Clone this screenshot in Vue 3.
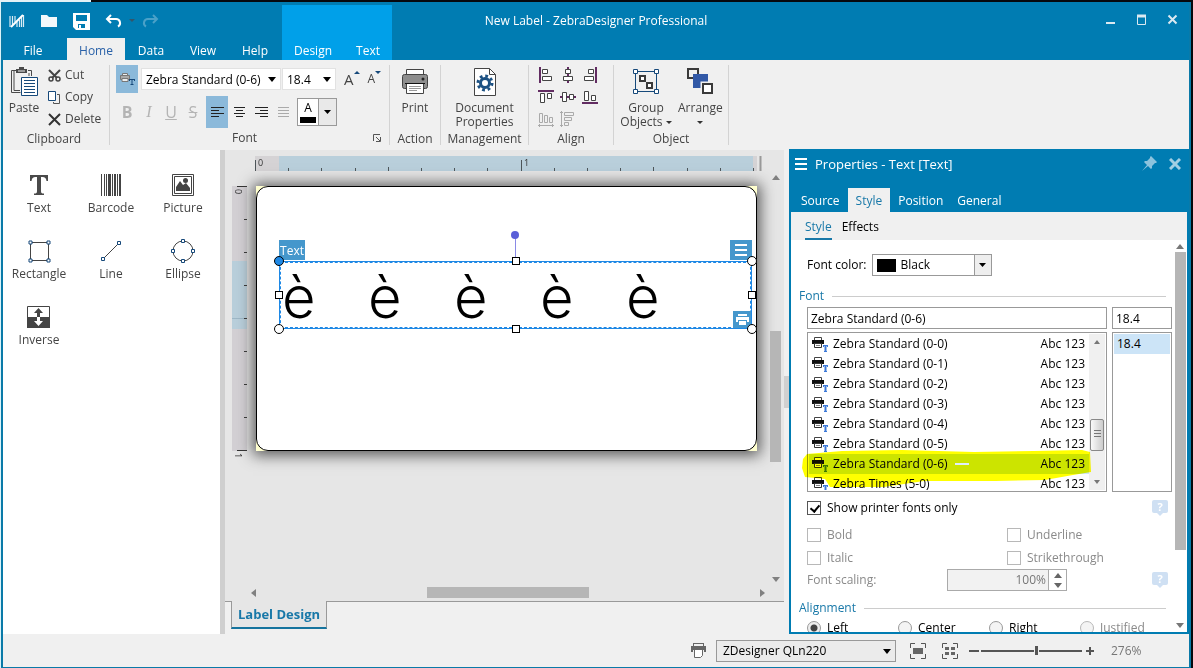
<script setup>
import { ref } from 'vue'

const fontName = ref('Zebra Standard (0-6)')
const fontSize = ref('18.4')
const zoom = ref(55)
const printerOnly = ref(true)
const alignment = ref('Left')

const mainTabs = ['File', 'Home', 'Data', 'View', 'Help']
const contextTabs = ['Design', 'Text']
const panelTabs = ['Source', 'Style', 'Position', 'General']
const fonts = [
  'Zebra Standard (0-0)', 'Zebra Standard (0-1)', 'Zebra Standard (0-2)', 'Zebra Standard (0-3)',
  'Zebra Standard (0-4)', 'Zebra Standard (0-5)', 'Zebra Standard (0-6)', 'Zebra Times (5-0)',
]
const alignments = ['Left', 'Center', 'Right', 'Justified']
const tools = ['Text', 'Barcode', 'Picture', 'Rectangle', 'Line', 'Ellipse', 'Inverse']
const handles = ['nw active round', 'n', 'ne round', 'w', 'e', 'sw round', 's', 'se round']
const hTicks = Array.from({ length: 16 }, (_, i) => ({ pos: Math.round(i * 33.2), big: i % 8 === 0, mid: i % 4 === 0 }))
const vTicks = Array.from({ length: 9 }, (_, i) => ({ pos: Math.round(i * 33), big: i % 8 === 0 }))
</script>

<template>
  <div class="page">
    <div class="window">
      <header class="top">
        <div class="quick">
          <svg class="logo" width="16" height="14" viewBox="0 0 16 14"><path d="M1 2v11M3.500 2v9M6 2v6M8 8v5M10.500 6v7M12.500 3v10M14.500 1v12" stroke="#d9ecf5" stroke-width="1.200" /><path d="M2 13 14 1" stroke="#fff" stroke-width="2" /></svg>
          <button aria-label="Open"><svg width="18" height="14" viewBox="0 0 18 14"><path d="M1 1h6l2 2h8v10H1z" fill="#f3f8fb" /></svg></button>
          <button aria-label="Save"><svg width="17" height="17" viewBox="0 0 17 17"><path d="M0 0h17v17H3l-3-3z" fill="#fff" /><path d="M3 2h11v6H3zM5 11h7v4H5z" fill="#007cb2" /><path d="M6 12h2v3H6z" fill="#fff" /></svg></button>
          <button aria-label="Undo"><svg width="18" height="14" viewBox="0 0 18 14"><path d="M2 5h9a4 4 0 0 1 2 7.500M6 1 2 5l4 4" fill="none" stroke="#fff" stroke-width="2" /></svg></button>
          <svg class="tiny" width="6" height="4"><path d="M0 0h6L3 3z" fill="#33566b" /></svg>
          <button aria-label="Redo" disabled><svg width="18" height="14" viewBox="0 0 18 14"><path d="M16 5H7a4 4 0 0 0-2 7.500M12 1l4 4-4 4" fill="none" stroke="#4aa1c8" stroke-width="2" /></svg></button>
        </div>
        <h1>New Label - ZebraDesigner Professional</h1>
        <nav class="tabs">
          <button v-for="t in mainTabs" :key="t" :class="['tab', 'tab-' + t.toLowerCase()]">{{ t }}</button>
        </nav>
        <nav class="context">
          <button v-for="t in contextTabs" :key="t" class="tab">{{ t }}</button>
        </nav>
        <div class="controls">
          <button aria-label="Minimize"><svg width="12" height="12"><path d="M1 9h9" stroke="#dbe9f1" stroke-width="2" /></svg></button>
          <button aria-label="Maximize"><svg width="12" height="12"><path d="M1.500 2v8.500h8V2" fill="none" stroke="#dbe9f1" /><path d="M1 2h9" stroke="#dbe9f1" stroke-width="3" /></svg></button>
          <button aria-label="Close"><svg width="12" height="12"><path d="m1.500 1.500 8 8m0-8-8 8" stroke="#dbe9f1" stroke-width="2" /></svg></button>
        </div>
      </header>

      <section class="ribbon">
        <div class="group clipboard">
          <div class="body">
            <button class="large">
              <svg width="28" height="30" viewBox="0 0 28 30"><path d="M8 3.500H1.500v22h9M18 3.500h3.500V9M4 3.500v20h6M19 6v3" fill="none" stroke="#4a4a4a" /><path d="M6 6V2h3V0h5v2h3v4z" fill="#4a4a4a" /><path d="M8 4h7" stroke="#f0f0f0" /><path d="M11.500 10.500h16v18h-16z" fill="#fff" stroke="#16497a" /><path d="M14 13.500h11M14 16.500h11M14 19.500h11M14 22.500h11M14 25.500h11" stroke="#16497a" /></svg>
              <span>Paste</span>
            </button>
            <div class="small-list">
              <button><svg width="13" height="13" viewBox="0 0 13 13"><path d="m1 1 8 8M12 1 4 9" stroke="#444" stroke-width="2" /><circle cx="3" cy="10" r="2" fill="none" stroke="#444" stroke-width="1.500" /><circle cx="10" cy="10" r="2" fill="none" stroke="#444" stroke-width="1.500" /></svg>Cut</button>
              <button><svg width="13" height="13" viewBox="0 0 13 13"><path d="M.500.500h7v9h-7z" fill="#fff" stroke="#16497a" /><path d="M9 3.500h2.500v9h-6V11" fill="none" stroke="#555" /></svg>Copy</button>
              <button><svg width="13" height="13" viewBox="0 0 13 13"><path d="m1 1 11 11M12 1 1 12" stroke="#333" stroke-width="2" /></svg>Delete</button>
            </div>
          </div>
          <div class="caption"><span>Clipboard</span></div>
        </div>
        <i class="sep"></i>
        <div class="group font">
          <div class="font-row first">
            <button class="toggle on" aria-label="Printer fonts"><svg width="15" height="14" viewBox="0 0 15 14"><path d="M2.500 3.500v-2h5v2" fill="#eee" stroke="#777" /><path d="M.5 3.500h9v4h-9z" fill="#aaa" stroke="#777" /><path d="M2 6.500h6v3H2z" fill="#eee" stroke="#777" /><path d="M9 7.500h6M12 7v6M10.500 12.500h3M9.500 7v2M14.500 7v2" stroke="#16497a" /></svg></button>
            <span class="combo name"><select aria-label="Font"><option>{{ fontName }}</option></select></span>
            <span class="combo size"><select aria-label="Font size"><option>{{ fontSize }}</option></select></span>
            <button class="grow" aria-label="Increase font size">A<svg width="6" height="3"><path d="M0 3h6L3 0z" fill="#16497a" /></svg></button>
            <button class="grow less" aria-label="Decrease font size">A<svg width="6" height="3"><path d="M0 0h6L3 3z" fill="#16497a" /></svg></button>
          </div>
          <div class="font-row second">
            <button class="toggle fmt" disabled><b>B</b></button>
            <button class="toggle fmt" disabled><i>I</i></button>
            <button class="toggle fmt" disabled><u>U</u></button>
            <button class="toggle fmt" disabled><s>S</s></button>
            <button class="toggle on left" aria-label="Align left"><svg width="13" height="11"><path d="M0 .5h13M0 3.500h8M0 6.500h13M0 9.500h8" stroke="#222" /></svg></button>
            <button class="toggle" aria-label="Align center"><svg width="13" height="11"><path d="M1 .5h11M3 3.500h7M1 6.500h11M3 9.500h7" stroke="#222" /></svg></button>
            <button class="toggle" aria-label="Align right"><svg width="13" height="11"><path d="M0 .5h13M5 3.500h8M0 6.500h13M5 9.500h8" stroke="#222" /></svg></button>
            <button class="toggle" aria-label="Justify" disabled><svg width="13" height="11"><path d="M1 .5h11M1 3.500h11M1 6.500h11M1 9.500h11" stroke="#aaa" /></svg></button>
            <button class="color"><span class="letter">A<i></i></span><span class="drop"><svg width="7" height="4"><path d="M0 0h7L3.500 4z" /></svg></span></button>
          </div>
          <div class="caption"><span>Font</span><svg width="8" height="8"><path d="M.5 7V.5H7M3 3l4 4M7.500 3v4.500H3" fill="none" stroke="#555" /></svg></div>
        </div>
        <i class="sep"></i>
        <div class="group action">
          <div class="body">
            <button class="large">
              <svg width="28" height="30" viewBox="0 0 28 30"><path d="M5.500 8V2.500h17V8" fill="#fff" stroke="#444" /><rect x="1.500" y="7.500" width="25" height="14" rx="2" fill="#8e8e8e" stroke="#444" /><circle cx="22" cy="12" r="1.500" fill="#222" /><path d="M4 16.500h20" stroke="#111" /><path d="M5.500 17v9.500h17V17" fill="#fff" stroke="#444" /><path d="M8 19.500h12M8 21.500h12M8 23.500h8" stroke="#999" /></svg>
              <span>Print</span>
            </button>
          </div>
          <div class="caption"><span>Action</span></div>
        </div>
        <i class="sep"></i>
        <div class="group management">
          <div class="body">
            <button class="large">
              <svg width="28" height="30" viewBox="0 0 28 30"><path d="M3.500 1.500h15l6 6v21h-21z" fill="#fff" stroke="#444" /><path d="M18.500 1.500v6h6" fill="none" stroke="#444" /><circle cx="14" cy="16" r="4.500" fill="none" stroke="#1c5183" stroke-width="3" /><circle cx="14" cy="16" r="7" fill="none" stroke="#1c5183" stroke-width="3" stroke-dasharray="2.750 2.750" /></svg>
              <span>Document</span>
              <span>Properties</span>
            </button>
          </div>
          <div class="caption"><span>Management</span></div>
        </div>
        <i class="sep"></i>
        <div class="group align">
          <div class="body">
            <button aria-label="Align lefts"><svg width="16" height="16"><path d="M2 0v16" stroke="#622c62" stroke-width="2" /><path d="M4.500 2.500h5v4h-5zM4.500 9.500h9v4h-9z" fill="#fff" stroke="#444" /></svg></button>
            <button aria-label="Align centers"><svg width="16" height="16"><path d="M8 0v16" stroke="#622c62" stroke-width="2" /><path d="M5.500 2.500h5v4h-5zM3.500 9.500h9v4h-9z" fill="#fff" stroke="#444" /></svg></button>
            <button aria-label="Align rights"><svg width="16" height="16"><path d="M14 0v16" stroke="#622c62" stroke-width="2" /><path d="M6.500 2.500h5v4h-5zM2.500 9.500h9v4h-9z" fill="#fff" stroke="#444" /></svg></button>
            <button aria-label="Align tops"><svg width="16" height="16"><path d="M0 2h16" stroke="#622c62" stroke-width="2" /><path d="M2.500 4.500h4v9h-4zM9.500 4.500h4v5h-4z" fill="#fff" stroke="#444" /></svg></button>
            <button aria-label="Align middles"><svg width="16" height="16"><path d="M0 8h16" stroke="#622c62" stroke-width="2" /><path d="M2.500 3.500h4v9h-4zM9.500 5.500h4v5h-4z" fill="#fff" stroke="#444" /></svg></button>
            <button aria-label="Align bottoms"><svg width="16" height="16"><path d="M0 14h16" stroke="#622c62" stroke-width="2" /><path d="M2.500 2.500h4v9h-4zM9.500 6.500h4v5h-4z" fill="#fff" stroke="#444" /></svg></button>
            <button aria-label="Distribute horizontally" disabled><svg width="16" height="16"><path d="M1.500 2.500h3v9h-3zM6.500 4.500h3v7h-3zM11.500 6.500h3v5h-3zM0 14.500h16M1.500 13v3M14.500 13v3" fill="none" stroke="#aaa" /></svg></button>
            <button aria-label="Distribute vertically" disabled><svg width="16" height="16"><path d="M4.500 1.500h9v3h-9zM4.500 6.500h7v3h-7zM4.500 11.500h4v3h-4zM1.500 0v16M0 1.500h3M0 14.500h3" fill="none" stroke="#aaa" /></svg></button>
          </div>
          <div class="caption"><span>Align</span></div>
        </div>
        <i class="sep"></i>
        <div class="group object">
          <div class="body">
            <button class="large">
              <svg width="28" height="30" viewBox="0 0 28 30"><path d="M3.500 4.500h21v20h-21z" fill="none" stroke="#16497a" /><path d="M1.500 2.500h4v4h-4zM22.500 2.500h4v4h-4zM1.500 22.500h4v4h-4zM22.500 22.500h4v4h-4z" fill="#fff" stroke="#16497a" /><path d="M8 9h5v5H8zM15 16h5v5h-5z" fill="#fff" stroke="#3a3a3a" stroke-width="2" /></svg>
              <span>Group</span>
              <span>Objects <svg width="6" height="4"><path d="M0 0h6L3 3z" fill="#333" /></svg></span>
            </button>
            <button class="large">
              <svg width="28" height="30" viewBox="0 0 28 30"><path d="M2 2h10v9H2z" fill="none" stroke="#3a3a3a" stroke-width="2" /><path d="M7 7h15v14H7z" fill="#3158a6" /><path d="M17 17h9v9h-9z" fill="#fff" stroke="#f0f0f0" stroke-width="5" /><path d="M17 17h9v9h-9z" fill="#fff" stroke="#3a3a3a" stroke-width="2" /></svg>
              <span>Arrange</span>
              <span><svg width="6" height="4"><path d="M0 0h6L3 3z" fill="#333" /></svg></span>
            </button>
          </div>
          <div class="caption"><span>Object</span></div>
        </div>
        <i class="sep"></i>
      </section>

      <main class="work">
        <aside class="toolbox">
          <button v-for="t in tools" :key="t" class="tool">
            <svg width="26" height="26" viewBox="0 0 26 26">
              <path v-if="t === 'Text'" d="M4 3h18v6h-1.500c-.5-3-1.500-4-4-4H15v14c0 2 .5 2.500 3 2.500V23H8v-1.500c2.500 0 3-.5 3-2.500V5H9.500c-2.500 0-3.500 1-4 4H4z" fill="#4a4a4a" />
              <g v-else-if="t === 'Barcode'" fill="#444"><path d="M3 2h1v22H3zM6 2h1v22H6zM8 2h1v22H8zM10 2h3v22h-3zM14 2h1v22h-1zM16 2h2v22h-2zM19 2h1v22h-1zM21 2h2v22h-2z" /></g>
              <g v-else-if="t === 'Picture'"><path d="M2.500 2.500h21v21h-21z" fill="none" stroke="#444" /><path d="M4.500 4.500h17v17h-17z" fill="#fff" stroke="#444" /><path d="M6 19v-4l4-6 3 4 3-2 4 5v3z" fill="#444" /><circle cx="15.500" cy="8.500" r="2.500" fill="#444" /></g>
              <g v-else-if="t === 'Rectangle'" fill="#fff" stroke="#16497a"><path d="M4.500 4.500h18v18h-18z" stroke="#444" /><path d="M3 3h3v3H3zM21 3h3v3h-3zM3 21h3v3H3zM21 21h3v3h-3z" /></g>
              <g v-else-if="t === 'Line'" fill="#fff" stroke="#16497a"><path d="M5 21 21 5" stroke="#444" /><path d="M3.500 19.500h3v3h-3zM19.500 3.500h3v3h-3z" /></g>
              <g v-else-if="t === 'Ellipse'" fill="#fff" stroke="#16497a"><circle cx="13" cy="13" r="10" stroke="#444" /><path d="M11.500 1.500h3v3h-3zM11.500 21.500h3v3h-3zM1.500 11.500h3v3h-3zM21.500 11.500h3v3h-3z" /></g>
              <g v-else><path d="M1.500 2.500h22v21h-22z" fill="#fff" stroke="#444" /><path d="M1 13h23v11H1z" fill="#444" /><path d="M12.500 4 8 9h3v4h3V9h3z" fill="#444" /><path d="M12.500 22 8 17h3v-4h3v4h3z" fill="#fff" /></g>
            </svg>
            <span>{{ t }}</span>
          </button>
        </aside>

        <div class="design">
          <div class="canvas">
            <svg class="ruler-h" width="510" height="15">
              <rect width="502" height="15" fill="#d5d3d5" /><rect x="24" width="474" height="15" fill="#b9cfdb" />
              <path v-for="(k, i) in hTicks" :key="i" :d="`M${k.pos + 0.5} ${k.big ? 4 : k.mid ? 11 : 12}V15`" stroke="#4d5559" />
              <path d="M505.500 0v15" stroke="#999" stroke-width="2" /><text x="3" y="10">0</text><text x="269" y="10">1</text>
            </svg>
            <svg class="ruler-v" width="16" height="276">
              <rect width="15" height="265" fill="#d3d0d4" /><rect y="75" width="15" height="68" fill="#b9cfdb" /><path d="M0 132.500h15" stroke="#9db7c6" />
              <path v-for="(k, i) in vTicks" :key="i" :d="`M${k.big ? 5 : 12} ${k.pos + 0.5}H15`" stroke="#333" />
              <text transform="translate(3 3) rotate(90)">0</text><text transform="translate(3 267) rotate(90)">1</text>
            </svg>
            <div class="sheet">
              <div class="label">
                <div class="tag">Text</div>
                <button class="obj-menu" aria-label="Object menu"><svg width="12" height="13"><path d="M0 1h12M0 6h12M0 11h12" stroke="#fff" stroke-width="2" /></svg></button>
                <div class="stem"></div>
                <div class="object-box">
                  <span v-for="n in 5" :key="n">è</span>
                  <div class="print-badge"><svg width="13" height="11"><path d="M2 0h9v2H2zM0 3h13v5h-2V6H2v2H0zM3 7h7v4H3z" fill="#fff" /></svg></div>
                  <i v-for="h in handles" :key="h" :class="['handle', h]"></i>
                </div>
              </div>
            </div>
            <div class="vscroll"><svg width="8" height="5"><path d="M0 5h8L4 0z" /></svg><span class="track"><i></i></span><svg width="8" height="5"><path d="M0 0h8L4 5z" /></svg></div>
            <div class="hscroll"><svg width="5" height="8"><path d="M5 0v8L0 4z" /></svg><span class="track"><i></i></span><svg width="5" height="8"><path d="M0 0v8l5-4z" /></svg></div>
          </div>
          <div class="sheets"><button>Label Design</button><span></span></div>
        </div>

        <div class="splitter"><i></i></div>

        <aside class="panel">
          <div class="panel-title">
            <svg width="12" height="12"><path d="M0 1h12M0 6h12M0 11h12" stroke="#fff" stroke-width="2" /></svg>
            <h2>Properties - Text [Text]</h2>
            <button aria-label="Pin"><svg width="15" height="15" viewBox="0 0 15 15"><path d="m9 0 6 6-1 1h-1l-3 3v2l-1 1-3-3-6 5 5-6-3-3 1-1h2l3-3V1z" fill="#8dc3dd" /></svg></button>
            <button aria-label="Close panel"><svg width="12" height="12"><path d="m1 1 10 10M11 1 1 11" stroke="#a3cfe3" stroke-width="3" /></svg></button>
          </div>
          <nav class="panel-tabs"><button v-for="t in panelTabs" :key="t" :class="{ on: t === 'Style' }">{{ t }}</button></nav>
          <nav class="sub-tabs"><button class="on">Style</button><button>Effects</button></nav>
          <div class="panel-main">
            <form class="props" @submit.prevent>
              <div class="row color-row">
                <label for="fcolor">Font color:</label>
                <span class="color-select"><i></i><select id="fcolor"><option>Black</option></select><svg width="7" height="4"><path d="M0 0h7L3.500 4z" /></svg></span>
              </div>
              <h3>Font</h3>
              <div class="font-grid">
                <input v-model="fontName" aria-label="Font name" type="text">
                <input v-model="fontSize" aria-label="Size" type="text">
                <div class="listbox">
                  <ul role="listbox" aria-label="Fonts">
                    <li v-for="f in fonts" :key="f" role="option" :aria-selected="f === fontName" :class="{ sel: f === fontName }">
                      <svg width="16" height="15" viewBox="0 0 16 15"><path d="M2.500 3V.5h7V3" fill="#fff" stroke="#444" /><path d="M0 3h12v4H0z" fill="#111" /><path d="M2.500 6.500h7v4h-7z" fill="#fff" stroke="#333" /><path d="M4 8.500h4" stroke="#888" /><path d="M11 8.500h5" stroke="#3b78d8" /><path d="M13.500 8v7" stroke="#3b78d8" stroke-width="2" /><path d="M12 14.500h3M11.500 8v2M15.500 8v2" stroke="#3b78d8" /></svg>
                      <span>{{ f }}</span><i v-if="f === fontName"></i><em>Abc 123</em>
                    </li>
                  </ul>
                  <div class="list-scroll"><svg width="6" height="4"><path d="M0 4h6L3 0z" /></svg><span><i></i></span><svg width="6" height="4"><path d="M0 0h6L3 4z" /></svg></div>
                  <svg class="marker" viewBox="0 0 290 40" preserveAspectRatio="none"><path d="M1 10 5 5 40 2l60-1 72 2 60-1 48-1 8 2 1 20-18 3-28 5-50 1H122l-40 6H28l-5-8-20-2-3-9z" fill="#ff0" /></svg>
                </div>
                <ul class="listbox sizes" role="listbox" aria-label="Sizes"><li role="option" aria-selected="true">18.4</li></ul>
              </div>
              <div class="row"><label class="check"><input v-model="printerOnly" type="checkbox">Show printer fonts only</label><span class="hint">?</span></div>
              <div class="row pair"><label class="check off"><input type="checkbox" disabled>Bold</label><label class="check off"><input type="checkbox" disabled>Underline</label></div>
              <div class="row pair italic"><label class="check off"><input type="checkbox" disabled>Italic</label><label class="check off"><input type="checkbox" disabled>Strikethrough</label></div>
              <div class="row scaling">
                <label for="scale" class="off">Font scaling:</label>
                <span class="spin"><input id="scale" value="100%" type="text" disabled><span><svg width="8" height="5"><path d="M0 5h8L4 0z" /></svg><svg width="8" height="5"><path d="M0 0h8L4 5z" /></svg></span></span>
                <span class="hint">?</span>
              </div>
              <h3 class="last">Alignment</h3>
              <div class="radios"><label v-for="a in alignments" :key="a" :class="['check', { off: a === 'Justified' }]"><input v-model="alignment" type="radio" name="al" :value="a" :disabled="a === 'Justified'">{{ a }}</label></div>
            </form>
            <div class="pscroll"><svg width="8" height="5"><path d="M0 5h8L4 0z" /></svg><span class="track"><i></i></span><svg width="8" height="5"><path d="M0 0h8L4 5z" /></svg></div>
          </div>
        </aside>
      </main>

      <footer class="status">
        <svg width="17" height="17" viewBox="0 0 17 17"><path d="M3 1.500h10M3.500 1v3M13.500 1v3" stroke="#666" fill="none" /><path d="M1 4h15v6h-2V8H3v2H1z" fill="#666" /><path d="M4.500 8v7.500h6l2-2V8" fill="#fff" stroke="#666" /></svg>
        <span class="combo printer"><select aria-label="Printer"><option>ZDesigner QLn220</option></select></span>
        <button class="fit" aria-label="Fit label"><svg width="16" height="16"><path d="M.5 5V.5H5M11 .5h4.500V5M15.500 11v4.500H11M5 15.500H.500V11" fill="none" stroke="#555" /><path d="M3 5h10v6H3z" fill="#666" /></svg></button>
        <button class="fit" aria-label="Fit objects"><svg width="16" height="16"><path d="M.5 5V.5H5M11 .5h4.500V5M15.500 11v4.500H11M5 15.500H.500V11" fill="none" stroke="#555" /><path d="M3 4h4v3H3zM9 4h4v3H9zM3 9h4v3H3zM9 9h4v3H9z" fill="#666" /></svg></button>
        <button class="step" aria-label="Zoom out"><svg width="10" height="10"><path d="M0 5h10" stroke="#555" stroke-width="2" /></svg></button>
        <input v-model="zoom" type="range" aria-label="Zoom">
        <button class="step" aria-label="Zoom in"><svg width="10" height="10"><path d="M1 5h8M5 1v8" stroke="#555" stroke-width="2" /></svg></button>
        <span class="pct">276%</span>
      </footer>
    </div>
  </div>
</template>

<style>
body { margin: 0; }
</style>

<style scoped>
.page { box-sizing: border-box; height: 100vh; padding: 2px 2px 0 1px; background: linear-gradient(90deg, #e3f1f6 91px, transparent 91px) 0 0 / 100% 2px no-repeat, linear-gradient(90deg, #d9f3fa 1px, #06080d 1px); font: 12px/16px "Open Sans", "Noto Sans", sans-serif; color: #444; }
.page * { box-sizing: border-box; }
button, select, input { font: inherit; color: inherit; margin: 0; border-radius: 0; }
button { padding: 0; border: 0; background: none; }
svg { display: block; flex: none; }
h1, h2, h3, ul { margin: 0; padding: 0; font: inherit; list-style: none; }
.window { height: 100%; display: flex; flex-direction: column; border: solid #0a7aa8; border-width: 0 2px 1px 2px; background: #f0f0f0; }

.top { display: grid; grid-template: 36px 22px / auto auto 1fr auto; flex: none; background: #007cb2; color: #fff; }
.top h1 { grid-area: 1 / 1 / 2 / -1; place-self: center; padding-top: 2px; }
.quick { grid-area: 1 / 1; display: flex; align-items: center; padding: 2px 0 0 6px; gap: 15px; }
.quick .tiny { margin: 0 -9px 0 -9px; }
.tabs { grid-area: 2 / 1; display: flex; width: 279px; }
.tab { width: 52px; height: 22px; padding-top: 4px; }
.tab-file { width: 60px; margin-right: 4px; }
.tab-home { width: 58px; background: #f0f0f0; color: #2b62a8; }
.context { grid-area: 1 / 2 / 3; display: flex; align-items: flex-end; margin-top: 3px; background: #00a0e9; }
.context .tab { width: 62px; }
.context .tab + .tab { width: 48px; }
.controls { grid-area: 1 / 4; display: flex; align-items: center; gap: 19px; padding-right: 10px; }

.ribbon { display: flex; flex: none; height: 90px; padding-top: 4px; background: #f0f0f0; }
.sep { width: 1px; height: 80px; margin-top: 1px; background: #d3d3d3; }
.group .body { display: flex; height: 66px; }
.caption { display: flex; align-items: center; height: 16px; margin-top: 1px; }
.caption span { flex: 1; text-align: center; }
.clipboard { width: 106px; }
.clipboard .caption { padding-right: 4px; }
.font { width: 279px; }
.action { width: 50px; }
.management { width: 87px; }
.align { width: 84px; }
.object { width: 114px; }
.large { display: flex; flex-direction: column; align-items: center; flex: 1; padding-top: 3px; line-height: 14px; white-space: nowrap; }
.large > svg { margin-bottom: 4px; }
.large span svg { display: inline-block; vertical-align: middle; }
.clipboard .large { flex: none; width: 42px; }
.clipboard .body { gap: 3px; }
.object .large { flex: 0 0 64px; }
.object .large + .large { flex: 0 0 40px; }
.small-list button { display: flex; align-items: center; gap: 4px; height: 22px; }
.font-row { display: flex; align-items: center; padding-left: 6px; }
.first { height: 28px; margin-top: 1px; }
.second { height: 32px; margin: 3px 0 2px; }
.toggle { display: grid; place-items: center; flex: none; width: 22px; height: 100%; }
.on.toggle { background: #8bb9da; }
.toggle.left { margin-left: 2px; }
.fmt { color: #b4b4b4; font-size: 16px; }
.fmt i { font-family: "Liberation Serif", serif; }
.combo { position: relative; height: 22px; background: #fff; border: 1px solid #e2e2e2; color: #000; }
.combo select { appearance: none; width: 100%; height: 100%; padding: 1px 0 0 4px; border: 0; background: none; }
.combo::after { content: ""; position: absolute; right: 4px; top: 8px; border: solid transparent; border-width: 5px 4px 0; border-top-color: #000; pointer-events: none; }
.combo.name { width: 140px; margin: 0 1px 0 3px; }
.combo.size { width: 54px; }
.grow { display: flex; margin-left: 8px; font-size: 15px; }
.grow.less { font-size: 12px; }
.color { display: flex; width: 40px; height: 28px; margin-left: 3px; border: 1px solid #999; background: #fff; color: #000; }
.letter { flex: 1; line-height: 18px; }
.letter i { display: block; height: 6px; margin: 0 2px; background: #000; }
.drop { display: grid; place-items: center; width: 18px; height: 100%; border-left: 1px solid #999; background: #e9e9e9; }
.font .caption svg { margin: 0 8px 0 -6px; }
.align .body { display: grid; grid-template: repeat(3, 22px) / repeat(3, 22px); place-items: center; padding-left: 6px; }

.work { display: flex; flex: 1; min-height: 0; }
.toolbox { display: grid; grid-template-columns: repeat(3, 72px); grid-auto-rows: 66px; align-content: start; width: 217px; padding-top: 20px; background: #fff; flex: none; }
.tool { display: flex; flex-direction: column; align-items: center; gap: 2px; padding-top: 2px; }
.design { display: flex; flex-direction: column; flex: 1; min-width: 0; border-left: 5px solid #cfcfcf; }
.canvas { position: relative; flex: 1; min-height: 0; overflow: hidden; background: #e6e6e6; }
.ruler-h { position: absolute; left: 30px; top: 6px; }
.ruler-v { position: absolute; left: 7px; top: 36px; overflow: visible; }
.canvas text { font-size: 9px; fill: #333; }
.sheet { position: absolute; left: 31px; top: 36px; width: 501px; height: 265px; background: #ffffcf; box-shadow: 0 1px 14px 3px #555; }
.label { position: relative; height: 100%; border: 1px solid #000; border-radius: 12px; background: #fff; }
.tag { position: absolute; left: 22px; top: 53px; width: 26px; height: 20px; line-height: 21px; text-align: center; background: #4597cc; color: #fff; }
.obj-menu { position: absolute; right: 4px; top: 53px; display: grid; place-items: center; width: 22px; height: 20px; background: #4597cc; }
.stem { position: absolute; left: 258px; top: 48px; height: 26px; border-left: 1px solid #8a8ae6; }
.stem::before { content: ""; position: absolute; left: -5px; top: -4px; width: 8px; height: 8px; border-radius: 50%; background: #5a5fd8; }
.object-box { position: absolute; left: 22px; right: 4px; top: 74px; height: 68px; display: flex; padding-left: 2px; border: 1px solid #1e88e5; outline: 1px dashed #1e88e5; outline-offset: -2px; }
.object-box span { width: 86px; font: 300 58px/70px Inter, sans-serif; color: #000; }
.handle { position: absolute; width: 8px; height: 8px; border: 1px solid #000; background: #fff; }
.round { width: 10px; height: 10px; border-radius: 50%; }
.n, .s { left: 50%; margin-left: -4px; }
.w, .e { top: 50%; margin-top: -4px; }
.nw, .ne { top: -6px; }
.sw, .se { bottom: -6px; }
.nw, .sw { left: -6px; }
.ne, .se { right: -6px; }
.n { top: -5px; }
.s { bottom: -5px; }
.w { left: -5px; }
.e { right: -5px; }
.active { background: #1e88e5; }
.print-badge { position: absolute; right: 0; bottom: 0; display: grid; place-items: center; width: 18px; height: 17px; background: #4597cc; }
.vscroll, .hscroll { position: absolute; display: flex; align-items: center; fill: #808080; }
.vscroll { flex-direction: column; right: 3px; top: 25px; bottom: 19px; width: 11px; }
.hscroll { left: 26px; right: 19px; bottom: 3px; height: 11px; }
.track { position: relative; flex: 1; }
.vscroll .track { width: 100%; }
.hscroll .track { height: 100%; }
.track i { position: absolute; background: #b6b6b6; }
.vscroll i { inset: 38% 0 29% 0; }
.hscroll i { inset: 0 34% 0 34%; }
.sheets { display: flex; height: 33px; flex: none; }
.sheets::before { content: ""; width: 6px; border-top: 1px solid #999; }
.sheets span { flex: 1; border-top: 1px solid #999; }
.sheets button { height: 28px; padding: 0 6px; border: 1px solid #999; border-top: 0; border-bottom: 2px solid #16749e; background: #e6e6e6; color: #1878a8; font-size: 13px; font-weight: 700; }
.splitter { display: flex; align-items: center; width: 5px; }
.splitter i { width: 5px; height: 32px; background: #d0d0d0; }

.panel { display: flex; flex-direction: column; width: 400px; flex: none; border: 2px solid #007cb2; border-top: 0; background: #fff; margin-top: -1px; color: #000; }
.panel-title { display: flex; align-items: center; height: 29px; padding: 0 6px 0 4px; background: #007cb2; color: #fff; font-size: 13px; }
.panel-title h2 { flex: 1; padding-left: 8px; }
.panel-title button + button { margin-left: 12px; }
.panel-tabs { display: flex; gap: 8px; height: 34px; padding-top: 10px; background: #007cb2; color: #fff; }
.panel-tabs button { padding: 1px 0 0; }
.panel-tabs button:first-child { padding-left: 10px; }
.panel-tabs .on { padding: 1px 8px 0; background: #f0f0f0; color: #1878a8; }
.panel-tabs button:last-child { padding-left: 6px; }
.sub-tabs { display: flex; gap: 10px; height: 28px; padding-left: 14px; background: #f0f0f0; }
.sub-tabs button { border-bottom: 2px solid transparent; padding-top: 4px; }
.sub-tabs .on { color: #1878a8; border-color: #1878a8; }
.panel-main { display: flex; flex: 1; min-height: 0; }
.props { flex: 1; overflow: hidden; padding: 14px 1px 0 8px; }
.row { display: flex; align-items: center; height: 22px; padding-left: 8px; }
.color-row { gap: 6px; }
.color-select { display: flex; align-items: center; width: 120px; height: 22px; border: 1px solid #999; position: relative; background: linear-gradient(90deg, #fff 101px, #999 101px, #999 102px, #eee 102px); }
.color-select i { position: absolute; left: 4px; width: 19px; height: 13px; background: #000; }
.color-select select { appearance: none; flex: 1; min-width: 0; border: 0; background: none; padding: 0 0 0 27px; }
.color-select svg { margin-right: 5px; }
h3 { display: flex; align-items: center; gap: 8px; height: 16px; margin: 12px 6px 3px 0; color: #1878a8; }
h3::after { content: ""; flex: 1; border-top: 1px solid #ccc; }
.font-grid { display: grid; grid-template-columns: 1fr 60px; gap: 3px 5px; padding-left: 8px; }
.font-grid > input { width: 100%; height: 22px; padding: 0 0 0 3px; border: 1px solid #999; }
.listbox { position: relative; display: flex; height: 160px; padding: 1px; border: 1px solid #999; }
.listbox > ul { flex: 1; overflow: hidden; }
.listbox li { display: flex; align-items: center; height: 20px; padding: 0 4px 0 3px; }
.listbox li span { padding-left: 5px; }
.listbox li i { width: 14px; height: 2px; margin-left: 7px; background: #dfeefa; position: relative; z-index: 2; }
.listbox em { font-style: normal; margin-left: auto; }
.listbox .sel { background: #cce4f7; }
.list-scroll { display: flex; flex-direction: column; align-items: center; width: 16px; padding: 6px 0; background: #f0f0f0; fill: #777; }
.list-scroll span { flex: 1; width: 14px; position: relative; }
.list-scroll i { position: absolute; top: 55%; height: 32px; width: 14px; border: 1px solid #888; border-radius: 2px; background: repeating-linear-gradient(#777 0 1px, transparent 1px 3px) center / 7px 9px no-repeat, linear-gradient(90deg, #fafafa, #ccc); }
.marker { position: absolute; left: -6px; top: 116px; width: 290px; height: 40px; mix-blend-mode: multiply; pointer-events: none; }
.sizes li { flex: 1; background: #cce4f7; }
.font-grid + .row { margin: 5px 0; }
.check { display: flex; align-items: center; gap: 6px; }
.check input { appearance: none; flex: none; width: 14px; height: 14px; border: 1px solid #555; background: #fff; }
.check input[type=checkbox]:checked::after { content: ""; display: block; width: 4px; height: 7px; margin: 1px 0 0 4px; border: solid #000; border-width: 0 2px 2px 0; transform: rotate(40deg); }
.check input[type=radio] { border-radius: 50%; border-color: #999; background: #f4f4f4; }
.check input[type=radio]:checked { background: radial-gradient(#444 0 3px, #eee 4px); }
.off { color: #8a8a8a; }
.check.off input { border-color: #b8b8b8; }
.pair .check { flex: 0 0 200px; }
.pair .check + .check { flex: 1; }
.pair.italic { margin-top: 1px; }
.hint { width: 16px; height: 13px; margin: 0 4px 4px auto; border-radius: 2px; background: #cfe0f3; color: #fff; font-size: 11px; line-height: 13px; text-align: center; font-weight: 700; position: relative; }
.hint::after { content: ""; position: absolute; left: 5px; top: 13px; border: solid transparent; border-width: 3px 3px 0; border-top-color: #cfe0f3; }
.scaling label { width: 140px; }
.spin { display: flex; width: 120px; height: 22px; border: 1px solid #aaa; }
.spin input { flex: 1; min-width: 0; padding: 0 2px; border: 0; background: #f2f2f2; color: #777; text-align: right; }
.spin > span { display: grid; place-items: center; width: 18px; border-left: 1px solid #aaa; fill: #666; }
h3.last { margin: 9px 6px 4px 0; }
.radios { display: grid; grid-template-columns: repeat(4, 91px); padding-left: 8px; }
.pscroll { display: flex; flex-direction: column; align-items: center; width: 14px; padding: 4px 0; gap: 3px; fill: #777; }
.pscroll .track { width: 11px; }
.pscroll i { inset: 0 0 19% 0; }

.status { display: flex; align-items: center; height: 33px; flex: none; justify-content: flex-end; padding-right: 47px; }
.combo.printer { width: 180px; margin: 0 14px 0 9px; border-color: #999; background: #ebebeb; }
.combo.printer select { padding-left: 6px; }
.fit { margin-right: 16px; }
.fit + .step { margin-left: -5px; }
.status input { appearance: none; width: 101px; height: 14px; margin: 0 3px 0 2px; background: linear-gradient(#555, #555) center / 100% 2px no-repeat; }
.status input::-webkit-slider-thumb { appearance: none; width: 3px; height: 9px; background: #555; box-shadow: 0 0 0 1px #f0f0f0; }
.pct { margin-left: 16px; width: 31px; color: #777; }
</style>
